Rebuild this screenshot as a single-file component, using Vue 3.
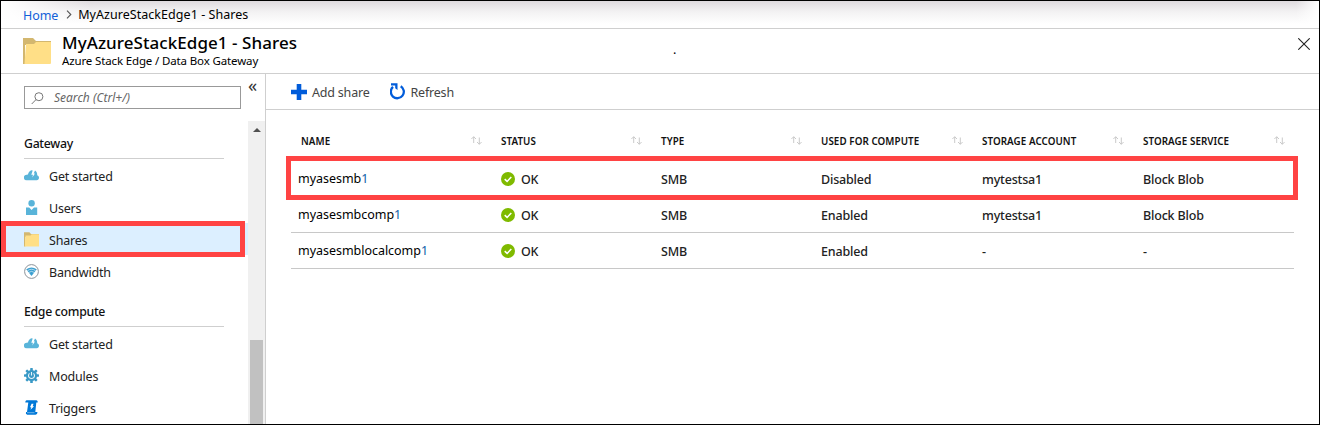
<script setup>
const sections = [
  {
    title: 'Gateway',
    items: [
      { label: 'Get started', icon: 'cloud' },
      { label: 'Users', icon: 'user' },
      { label: 'Shares', icon: 'folder', selected: true },
      { label: 'Bandwidth', icon: 'wifi' },
    ],
  },
  {
    title: 'Edge compute',
    items: [
      { label: 'Get started', icon: 'cloud' },
      { label: 'Modules', icon: 'gear' },
      { label: 'Triggers', icon: 'trigger' },
    ],
  },
]

const columns = ['NAME', 'STATUS', 'TYPE', 'USED FOR COMPUTE', 'STORAGE ACCOUNT', 'STORAGE SERVICE']

const shares = [
  { name: 'myasesmb', type: 'SMB', compute: 'Disabled', account: 'mytestsa1', service: 'Block Blob', marked: true },
  { name: 'myasesmbcomp', type: 'SMB', compute: 'Enabled', account: 'mytestsa1', service: 'Block Blob' },
  { name: 'myasesmblocalcomp', type: 'SMB', compute: 'Enabled', account: '-', service: '-' },
]
</script>

<template>
  <div class="window">
    <nav class="crumbs">
      <a class="home">Home</a>
      <svg class="chevron" width="6" height="9" viewBox="0 0 6 9"><path d="M1 .7 4.8 4.5 1 8.3" /></svg>
      <span class="here">MyAzureStackEdge1 - Shares</span>
    </nav>

    <header class="blade-head">
      <svg class="folder-big" width="28" height="26" viewBox="0 0 28 26">
        <path fill="#d3b76f" d="M0 0h10l3 3h15v4H2v19H0z" />
        <path fill="#ffdf87" d="M3 6h8l2-2h15v21q0 1-1 1H1.500z" />
      </svg>
      <div class="titles">
        <h1>MyAzureStackEdge1 - Shares</h1>
        <p>Azure Stack Edge / Data Box Gateway</p>
      </div>
      <span class="dot">.</span>
      <svg class="close" width="12" height="12" viewBox="0 0 12 12"><path d="M.3.3l11.400 11.400M11.700.3.3 11.700" /></svg>
    </header>

    <div class="body">
      <aside class="side">
        <div class="menu">
          <div class="search-row">
            <div class="search">
              <svg width="13" height="13" viewBox="0 0 13 13"><circle cx="7.900" cy="4.700" r="4" /><path d="M5 7.600.7 12" /></svg>
              <span>Search (Ctrl+/)</span>
            </div>
            <span class="collapse">«</span>
          </div>
          <section v-for="s in sections" :key="s.title">
            <h2>{{ s.title }}</h2>
            <div v-for="i in s.items" :key="i.label" class="item" :class="{ selected: i.selected }">
              <svg v-if="i.icon === 'cloud'" class="ico" viewBox="0 0 15 15">
                <path fill="#59b4d9" d="M2.800 12.300A2.800 2.800 0 0 1 2.600 6.700L4 6.600C4.300 4.400 5.800 2.900 7.600 2.300L8.700 2.600 7.300 6.700H9L8.300 9.600 11 5.600H9.700L11 2.400c1.600.7 2.300 2.500 2.200 4.900 1.200.4 1.800 1.300 1.800 2.500 0 1.500-1 2.500-2.300 2.500z" />
              </svg>
              <svg v-else-if="i.icon === 'user'" class="ico" viewBox="0 0 15 15">
                <circle cx="7.600" cy="3.200" r="3.200" fill="#59b4d9" />
                <path fill="#59b4d9" d="M2 7.500h3.200l2.400 2.600L10 7.500h3.200V15H2z" />
              </svg>
              <svg v-else-if="i.icon === 'folder'" class="ico" viewBox="0 0 15 15">
                <path fill="#d3b76f" d="M0 .3h5.400L7 2h8v3H1.300v9.500H0z" />
                <path fill="#ffdf87" d="M1.500 3.500h5L7.700 2.300H15v12.200H.8z" />
              </svg>
              <svg v-else-if="i.icon === 'wifi'" class="ico" viewBox="0 0 15 15">
                <circle cx="7.500" cy="7.500" r="6.900" fill="#fff" stroke="#8b9299" stroke-width="1" />
                <path fill="#3a9fd0" d="M2.200 5.300Q7.500 1.800 12.800 5.300L7.500 12z" />
                <path fill="none" stroke="#fff" stroke-width=".6" d="M3.300 6.900q4.200-3.300 8.400 0M4.600 8.500q2.900-2.300 5.800 0" />
              </svg>
              <svg v-else-if="i.icon === 'gear'" class="ico" viewBox="0 0 15 15">
                <g fill="#3999c6">
                  <circle cx="7.500" cy="7.500" r="5.600" />
                  <rect v-for="a in [0, 45, 90, 135]" :key="a" x="6.200" y="0" width="2.600" height="15" rx=".6" :transform="`rotate(${a} 7.500 7.500)`" />
                </g>
                <path d="M5.500 5.300a3 3 0 1 0 4 0M7.500 4v3.600" fill="none" stroke="#e8f4fa" stroke-width="1.100" />
              </svg>
              <svg v-else class="ico" viewBox="0 0 15 15">
                <path fill="#0078d7" d="M2.500.3H12.500q1.500.4 1.200 2.200h-1.400L11.300 12h2.200q0 2.700-2 2.700H3.200Q1.300 14.300 2 12h1L4.300 2.500H1.300Q1.200.8 2.500.3z" />
                <path fill="#fff" d="M7.600 3.800h1.900L8.700 6.200h1.400L6.500 9.700l.8-2.500H6z" />
                <path stroke="#9fd0f0" stroke-width=".7" d="M3 12.700h7.500" />
              </svg>
              <span>{{ i.label }}</span>
            </div>
          </section>
        </div>
        <div class="scrollbar">
          <i class="up"></i>
          <i class="thumb"></i>
        </div>
        <div class="mark mark-menu"></div>
      </aside>

      <main>
        <div class="toolbar">
          <svg width="16" height="16" viewBox="0 0 16 16"><path fill="#015cda" d="M5.700 0h4.600v5.700H16v4.600h-5.700V16H5.700v-5.700H0V5.700h5.700z" /></svg>
          <span class="add">Add share</span>
          <svg width="16" height="17" viewBox="0 0 16 17">
            <path fill="none" stroke="#015cda" stroke-width="2.300" d="M10.700 3.200A6.500 6.500 0 1 1 3 3.900" />
            <path fill="#015cda" d="M1 .2h6.500V7L5.200 5.200V2.500H1z" />
          </svg>
          <span class="refresh">Refresh</span>
        </div>

        <div class="grid">
          <div class="row head">
            <div v-for="c in columns" :key="c" class="cell">
              <span>{{ c }}</span>
              <svg width="11" height="9" viewBox="0 0 11 9"><path d="M2.700 7V.8M.4 3 2.700.7 5 3M8.300 1.500v6.700M6 6l2.300 2.300L10.600 6" /></svg>
            </div>
          </div>
          <div v-for="s in shares" :key="s.name" class="row">
            <div class="cell name">{{ s.name }}<b>1</b></div>
            <div class="cell">
              <svg class="ok" width="14" height="14" viewBox="0 0 14 14"><circle cx="7" cy="7" r="7" fill="#7fba00" /><path d="M3.700 7.100 6.100 9.400l4.200-4.500" /></svg>
              <span>OK</span>
            </div>
            <div class="cell">{{ s.type }}</div>
            <div class="cell">{{ s.compute }}</div>
            <div class="cell">{{ s.account }}</div>
            <div class="cell">{{ s.service }}</div>
            <div v-if="s.marked" class="mark mark-row"></div>
          </div>
        </div>
      </main>
    </div>
  </div>
</template>

<style>
body { margin: 0; background: #fff; }
</style>

<style scoped>
* { box-sizing: border-box; }
.window {
  width: 1320px; height: 425px; border: 1px solid #000; overflow: hidden;
  display: flex; flex-direction: column; background: #fff;
  font: 12.500px/18px "Noto Sans", "Open Sans", sans-serif; letter-spacing: -.2px; color: #222;
}
.crumbs {
  height: 28px; flex: none; display: flex; align-items: center; padding-left: 22px;
  border-bottom: 1px solid #cfcfcf;
  background: linear-gradient(90deg, #fff 0, transparent 90px, transparent 1295px, #fff 1318px), linear-gradient(#dedade, #f3f2f3 40%, #fff 85%);
}
.home { color: #1160d8; letter-spacing: -.1px; padding-top: 2px; }
.chevron { margin: 0 6px 0 8px; }
.chevron path { fill: none; stroke: #555; stroke-width: 1.100; }
.here { color: #000; letter-spacing: .05px; }
.blade-head { height: 45px; flex: none; display: flex; border-bottom: 1px solid #cfcfcf; padding-left: 22px; color: #000; }
.folder-big { margin-top: 9px; }
.titles { width: 622px; padding-left: 11px; }
h1 { margin: 4px 0 0; font-size: 17px; line-height: 20px; font-weight: 500; letter-spacing: .06px; }
p { margin: 0; font-size: 11.500px; line-height: 16px; letter-spacing: -.14px; }
.dot { margin-top: 12px; }
.close { margin: 9px 9px 0 auto; }
.close path { stroke: #222; stroke-width: 1.100; }
.body { flex: 1; min-height: 0; display: flex; }
.side { position: relative; width: 265px; flex: none; display: flex; border-right: 1px solid #cfcfcf; }
.menu { width: 247px; flex: none; }
.search-row { display: flex; height: 45px; padding: 12px 0 0 23px; }
.search {
  width: 217px; height: 23px; flex: none; border: 1px solid #999; display: flex; align-items: center;
  padding-left: 6px; font-style: italic; font-size: 12px; letter-spacing: 0; color: #666;
}
.search svg { margin: 2px 10px 0 0; }
.search circle, .search path { fill: none; stroke: #777; }
.collapse { margin: -10px 0 0 7px; font-size: 18px; color: #333; }
h2 { margin: 0 24px 0 23px; height: 40px; padding-top: 16px; border-bottom: 1px solid #cfcfcf; font-size: 12.300px; line-height: 18px; font-weight: 500; color: #111; letter-spacing: -.3px; }
.item { height: 32px; display: flex; align-items: center; padding: 3px 0 0 23px; }
.item span { padding-top: 1px; }
.item.selected { background: #dcefff; }
.ico { width: 15px; height: 15px; margin: -3px 10px 0 0; }
.scrollbar { position: relative; width: 17px; margin-top: 47px; background: #f0f0f0; display: flex; flex-direction: column; align-items: center; }
.up { margin-top: 7px; border: 4px solid transparent; border-top: 0; border-bottom: 4px solid #505050; }
.thumb { width: 13px; flex: 1; margin-top: 208px; background: #c1c1c1; }
.mark { position: absolute; border: 5px solid #ff4343; }
.mark-menu { left: 0; top: 147px; width: 244px; height: 36px; }
main { flex: 1; }
.toolbar { height: 36px; border-bottom: 1px solid #cfcfcf; display: flex; align-items: center; padding-left: 25px; color: #444; }
.add { margin: 2px 20px 0 5px; }
.refresh { margin: 2px 0 0 5px; }
.grid { margin: 15px 0 0 25px; width: 1003px; }
.row { position: relative; display: grid; grid-template-columns: 200px 160px 160px 161px 161px 161px; height: 36px; border-bottom: 1px solid #c8c8c8; }
.cell { display: flex; align-items: center; padding: 3px 9px 0 10px; font-weight: 500; letter-spacing: -.18px; }
.head .cell { justify-content: space-between; font-size: 9.800px; font-weight: 600; color: #111; letter-spacing: .08px; padding: 0 9px 2px 10px; }
.head svg { margin-top: -2px; }
.head path { fill: none; stroke: #c4c4c4; stroke-width: .9; }
.row .name { padding: 1px 0 0 7px; font-weight: 400; color: #000; letter-spacing: -.03px; }
.name b { font-weight: 400; color: #1160a8; }
.ok { margin: -2px 6px 0 0; }
.ok path { fill: none; stroke: #fff; stroke-width: 1.500; }
.mark-row { left: -5px; top: -5px; width: 1012px; height: 44px; }
</style>
